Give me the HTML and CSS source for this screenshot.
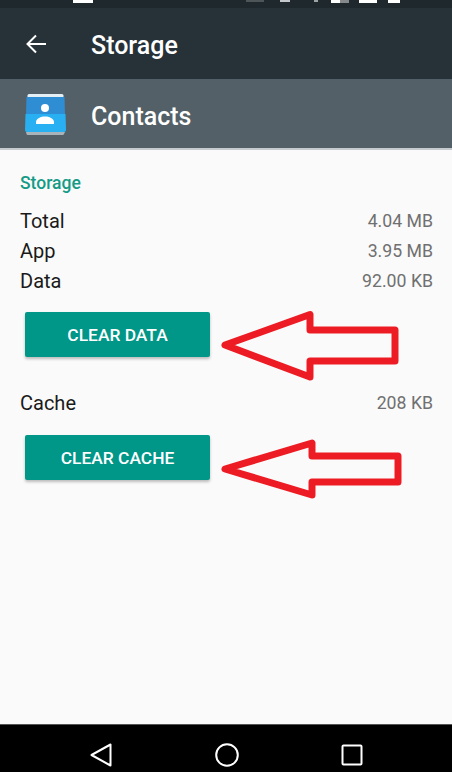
FILE: index.html
```html
<!DOCTYPE html>
<html lang="en">
<head>
    <meta charset="UTF-8">
    <meta name="viewport" content="width=device-width, initial-scale=1.0">
    <title>Storage</title>
    <link rel="stylesheet" href="styles.css">
</head>
<body>
    <div class="phone">
        <div class="status-bar">
            <span class="clip clip-a"></span>
            <span class="clip clip-b"></span>
            <span class="clip clip-c"></span>
            <span class="clip clip-d"></span>
            <span class="clip clip-e"></span>
            <span class="clip clip-f"></span>
            <span class="clip clip-g"></span>
            <span class="clip clip-h"></span>
        </div>

        <header class="app-bar">
            <svg class="back-icon" width="24" height="24" viewBox="0 0 24 24">
                <path d="M22 12H3.500M12 3.500L3.500 12l8.500 8.500" fill="none" stroke="#fff" stroke-width="2"/>
            </svg>
            <h1>Storage</h1>
        </header>

        <div class="app-header">
            <svg class="app-icon" width="41" height="41" viewBox="0 0 41 41">
                <path d="M2.500 1.500a1.500 1.500 0 0 1 1.500-1.500h33a1.500 1.500 0 0 1 1.500 1.500V5h-36z" fill="#e3eef5"/>
                <path d="M1.500 3h38l.5 18H1z" fill="#2f8dd3"/>
                <path d="M.5 20h40l.5 16a2 2 0 0 1-2 2H2a2 2 0 0 1-2-2z" fill="#29b0f2"/>
                <path d="M1 38h39l-1 2a1.500 1.500 0 0 1-1.500 1h-34.500a1.500 1.500 0 0 1-1.500-1z" fill="#a9b4ba"/>
                <circle cx="20" cy="14" r="4" fill="#fff"/>
                <path d="M11 30v-2c0-3.500 5-5.500 9-5.500s9 2 9 5.500v2z" fill="#fff"/>
            </svg>
            <h2>Contacts</h2>
        </div>

        <main class="content">
            <h3>Storage</h3>
            <div class="row"><span>Total</span><span class="value">4.04 MB</span></div>
            <div class="row"><span>App</span><span class="value">3.95 MB</span></div>
            <div class="row"><span>Data</span><span class="value">92.00 KB</span></div>
            <button class="action first">CLEAR DATA</button>
            <div class="row cache"><span>Cache</span><span class="value">208 KB</span></div>
            <button class="action">CLEAR CACHE</button>
        </main>

        <nav class="nav-bar">
            <svg width="26" height="26" viewBox="0 0 26 26">
                <path d="M22.500 2.500v21L3.500 13z" fill="none" stroke="#fff" stroke-width="2" stroke-linejoin="round"/>
            </svg>
            <svg width="26" height="26" viewBox="0 0 26 26">
                <circle cx="13" cy="13" r="10.800" fill="none" stroke="#fff" stroke-width="2"/>
            </svg>
            <svg width="26" height="26" viewBox="0 0 26 26">
                <rect x="3.500" y="3.500" width="19" height="19" rx="1" fill="none" stroke="#fff" stroke-width="2"/>
            </svg>
        </nav>

        <!-- red arrows painted over the screenshot -->
        <svg class="arrows" width="452" height="772" viewBox="0 0 452 772">
            <path d="M225 345L310 314.500V330H395V361H310V377Z"/>
            <path d="M225 469L312 443V456H398V482H312V495Z"/>
        </svg>
    </div>
</body>
</html>
```

FILE: styles.css
```css
* {
    box-sizing: border-box;
}
body {
    margin: 0;
    font-family: Roboto, "Liberation Sans", sans-serif;
    background-color: #fafafa;
}
.phone {
    position: relative;
    display: flex;
    flex-direction: column;
    width: 452px;
    height: 772px;
    overflow: hidden;
}
.status-bar {
    display: flex;
    align-items: flex-start;
    height: 8px;
    background-color: #1f282d;
}
.clip {
    display: block;
    height: 3px;
    background-color: #fff;
}
.clip-a { width: 20px; margin-left: 73px; }
.clip-b { width: 18px; margin-left: 153px; height: 2px; background-color: #4d5559; }
.clip-c { width: 10px; margin-left: 16px; height: 2px; background-color: #c4c7c9; }
.clip-d { width: 4px; margin-left: 24px; height: 2px; background-color: #9ea3a5; }
.clip-e { width: 9px; margin-left: 13px; }
.clip-f { width: 9px; background-color: #85898c; }
.clip-g { width: 18px; margin-left: 10px; }
.clip-h { width: 12px; margin-left: 11px; }
.app-bar {
    display: flex;
    align-items: center;
    height: 71px;
    padding: 1px 0 0 24px;
    background-color: #263238;
    color: #fff;
}
.back-icon {
    margin-right: 43px;
}
h1, h2 {
    margin: 0;
    padding-top: 2px;
    font-size: 25px;
    font-weight: 500;
}
h2 {
    padding-top: 3px;
}
.app-header {
    display: flex;
    align-items: center;
    height: 71px;
    padding: 2px 0 0 25px;
    background-color: #546067;
    border-bottom: 2px solid #c5cbce;
    color: #fff;
}
.app-icon {
    margin-right: 25px;
}
.content {
    flex: 1;
    padding: 0 19px 0 20px;
    background-color: #fafafa;
}
h3 {
    margin: 22px 0 12px;
    font-size: 17.500px;
    line-height: 22px;
    font-weight: 500;
    color: #159a87;
}
.row {
    display: flex;
    justify-content: space-between;
    align-items: center;
    height: 30px;
    font-size: 20px;
    color: #1a1a1a;
}
.value {
    font-size: 17.700px;
    color: #707070;
}
.action {
    display: block;
    width: 185px;
    height: 45px;
    margin-left: 5px;
    border: none;
    border-radius: 2px;
    background-color: #009688;
    box-shadow: 0 2px 3px rgba(0,0,0,0.25);
    color: #fff;
    font-family: inherit;
    font-size: 17.400px;
    font-weight: 500;
}
.action.first {
    margin-top: 16px;
}
.cache {
    margin: 31px 0 17px;
}
.nav-bar {
    display: flex;
    justify-content: space-between;
    align-items: center;
    height: 48px;
    padding: 12px 87px 0 88px;
    background-color: #000;
    border-top: 1px solid #555;
}
.arrows {
    position: absolute;
    top: 0;
    left: 0;
}
.arrows path {
    fill: none;
    stroke: #ed1c24;
    stroke-width: 7;
    stroke-linejoin: round;
}
```
